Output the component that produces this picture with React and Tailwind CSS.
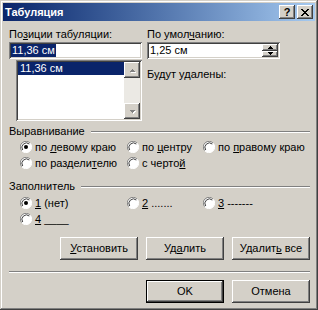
import React from "react";

const raised =
  "bg-[#d4d0c8] shadow-[inset_-1px_-1px_#404040,inset_1px_1px_#ffffff,inset_-2px_-2px_#808080,inset_2px_2px_#d4d0c8]";
const sunken =
  "bg-white shadow-[inset_1px_1px_#808080,inset_-1px_-1px_#ffffff,inset_2px_2px_#404040,inset_-2px_-2px_#d4d0c8]";

function Radio({ checked, children }) {
  return (
    <div className="flex items-center h-[16px]">
      <div className="relative w-[12px] h-[12px] shrink-0">
        <svg width="12" height="12" viewBox="0 0 12 12" className="block">
          <circle cx="6" cy="6" r="5.5" fill="#fff" />
          <path d="M10.2 2.2 A5.5 5.5 0 0 0 1.8 9.8" stroke="#808080" strokeWidth="1" fill="none" />
          <path d="M9.3 3 A4.5 4.5 0 0 0 2.7 9" stroke="#404040" strokeWidth="1" fill="none" />
          <path d="M10.2 2.2 A5.5 5.5 0 0 1 1.8 9.8" stroke="#ffffff" strokeWidth="1" fill="none" />
          {checked && <circle cx="6" cy="6" r="2" fill="#000" />}
        </svg>
      </div>
      <span className="ml-[3px]">{children}</span>
    </div>
  );
}

function Btn({ children, def, className = "" }) {
  if (def) {
    return (
      <div className={"h-[23px] w-[78px] border border-black " + className}>
        <div className={"h-full w-full flex items-center justify-center " + raised}>{children}</div>
      </div>
    );
  }
  return (
    <div className={"h-[23px] w-[78px] flex items-center justify-center " + raised + " " + className}>
      {children}
    </div>
  );
}

function GroupHeader({ children }) {
  return (
    <div className="flex items-center h-[13px]">
      <span>{children}</span>
      <div className="flex-1 ml-[6px] flex flex-col">
        <div className="h-[1px] bg-[#808080]" />
        <div className="h-[1px] bg-white" />
      </div>
    </div>
  );
}

function Arrow({ dir, disabled }) {
  const d = dir === "up" ? "M4 1 L7 4 L1 4 Z" : "M1 1 L7 1 L4 4 Z";
  return (
    <svg width="8" height="5" viewBox="0 0 8 5" className="block" shapeRendering="crispEdges">
      {disabled && <path d={d} transform="translate(1,1)" fill="#fff" />}
      <path d={d} fill={disabled ? "#808080" : "#000"} />
    </svg>
  );
}

export default function App() {
  return (
    <div
      className="w-[318px] h-[310px] p-[3px] flex flex-col bg-[#d4d0c8] text-black text-[11px] leading-[13px] shadow-[inset_-1px_-1px_#404040,inset_1px_1px_#d4d0c8,inset_-2px_-2px_#808080,inset_2px_2px_#ffffff]"
      style={{ fontFamily: '"Liberation Sans", Arial, sans-serif' }}
    >
      {/* Title bar */}
      <div className="h-[18px] flex items-center pl-[2px] pr-[2px] bg-gradient-to-r from-[#0a246a] to-[#a6caf0]">
        <span className="text-white font-bold text-[11px] flex-1">Табуляция</span>
        <div className={"w-[16px] h-[14px] flex items-center justify-center font-bold text-[11px] " + raised}>
          ?
        </div>
        <div className={"w-[16px] h-[14px] ml-[2px] flex items-center justify-center " + raised}>
          <svg width="8" height="7" viewBox="0 0 8 7" shapeRendering="crispEdges">
            <path d="M0 0h2v1h1v1h2V1h1V0h2v1H7v1H6v1H5v1h1v1h1v1h1v1H6V6H5V5H3v1H2v1H0V6h1V5h1V4h1V3H2V2H1V1H0Z" fill="#000" />
          </svg>
        </div>
      </div>

      {/* Body */}
      <div className="flex flex-col pl-[6px] pr-[5px]">
        <div className="flex">
          <div className="w-[133px] flex flex-col">
            <div className="mt-[7px]">
              По<u>з</u>иции табуляции:
            </div>
            <div className={"mt-[1px] h-[17px] flex items-center pl-[2px] " + sunken}>
              <span className="bg-[#0a246a] text-white px-[1px]">11,36 см</span>
            </div>
            <div className={"ml-[7px] mt-[1px] h-[61px] w-[126px] p-[2px] flex " + sunken}>
              <div className="flex-1 flex flex-col">
                <div className="h-[13px] bg-[#0a246a] text-white pl-[2px] leading-[13px]">11,36 см</div>
              </div>
              <div className="w-[16px] flex flex-col bg-[#ebe9e4]">
                <div className={"h-[16px] flex items-center justify-center " + raised}>
                  <Arrow dir="up" disabled />
                </div>
                <div className="flex-1" />
                <div className={"h-[16px] flex items-center justify-center " + raised}>
                  <Arrow dir="down" disabled />
                </div>
              </div>
            </div>
          </div>
          <div className="w-[133px] ml-[5px] flex flex-col">
            <div className="mt-[7px]">
              По умол<u>ч</u>анию:
            </div>
            <div className={"mt-[1px] h-[17px] flex items-center pl-[3px] pr-[2px] py-[2px] " + sunken}>
              <span className="flex-1">1,25 см</span>
              <div className="w-[16px] h-full flex flex-col">
                <div className={"flex-1 flex items-center justify-center " + raised}>
                  <Arrow dir="up" />
                </div>
                <div className={"flex-1 flex items-center justify-center " + raised}>
                  <Arrow dir="down" />
                </div>
              </div>
            </div>
            <div className="mt-[9px]">Будут удалены:</div>
          </div>
        </div>

        {/* Alignment */}
        <div className="mt-[4px]">
          <GroupHeader>Выравнивание</GroupHeader>
        </div>
        <div className="mt-[1px] ml-[11px] grid grid-cols-[107px_76px_auto]">
          <Radio checked>
            по <u>л</u>евому краю
          </Radio>
          <Radio>
            по <u>ц</u>ентру
          </Radio>
          <Radio>
            по <u>п</u>равому краю
          </Radio>
          <Radio>
            по раздели<u>т</u>елю
          </Radio>
          <Radio>
            с черто<u>й</u>
          </Radio>
        </div>

        {/* Leader */}
        <div className="mt-[9px]">
          <GroupHeader>Заполнитель</GroupHeader>
        </div>
        <div className="mt-[2px] ml-[11px] grid grid-cols-[107px_76px_auto]">
          <Radio checked>
            <u>1</u> (нет)
          </Radio>
          <Radio>
            <u>2</u> .......
          </Radio>
          <Radio>
            <u>3</u> -------
          </Radio>
          <Radio>
            <u>4</u> ____
          </Radio>
        </div>

        {/* Buttons */}
        <div className="mt-[10px] flex justify-end gap-[8px]">
          <Btn>
            <span>
              <u>У</u>становить
            </span>
          </Btn>
          <Btn>
            <span>
              Уд<u>а</u>лить
            </span>
          </Btn>
          <Btn>
            <span>
              Удалит<u>ь</u> все
            </span>
          </Btn>
        </div>

        <div className="mt-[11px] flex flex-col">
          <div className="h-[1px] bg-[#808080]" />
          <div className="h-[1px] bg-white" />
        </div>

        <div className="mt-[7px] flex justify-end gap-[8px]">
          <Btn def>OK</Btn>
          <Btn>Отмена</Btn>
        </div>
      </div>
    </div>
  );
}
